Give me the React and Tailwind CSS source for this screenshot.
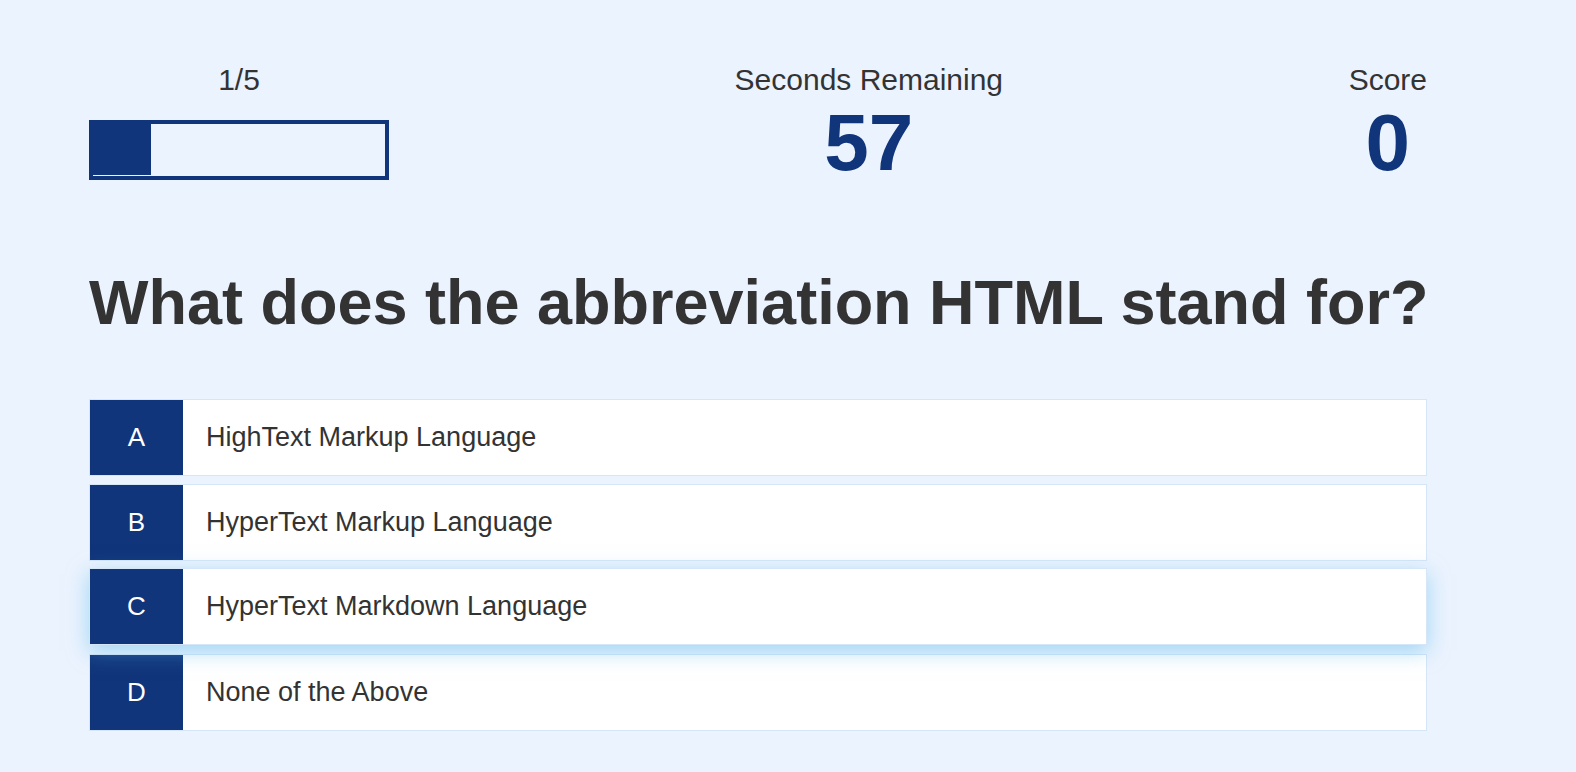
const choices = [
  { letter: 'A', text: 'HighText Markup Language' },
  { letter: 'B', text: 'HyperText Markup Language' },
  { letter: 'C', text: 'HyperText Markdown Language', hover: true },
  { letter: 'D', text: 'None of the Above' },
];

function Choice({ letter, text, hover }) {
  return (
    <div
      className={`mb-2 flex h-[77px] border border-[#d5e6f8] bg-white ${
        hover ? '-translate-y-px shadow-[0_6px_20px_0_rgba(86,185,235,0.5)]' : ''
      }`}
    >
      <div className="grid w-[93px] shrink-0 place-items-center bg-[#11357a] text-[26px] text-white">
        {letter}
      </div>
      <p className="flex items-center px-[23px] text-[27px] text-[#333]">{text}</p>
    </div>
  );
}

export default function App() {
  return (
    <div className="min-h-screen bg-[#ebf3fe] font-['Liberation_Sans',Arial,sans-serif] text-[#333]">
      <div className="ml-[89px] w-[1338px] pt-[63px]">
        {/* HUD */}
        <div className="flex items-start justify-between">
          <div className="flex w-[300px] flex-col items-center">
            <p className="text-[30px] leading-[1.15]">1/5</p>
            <div className="mt-[22px] h-[60px] w-[300px] border-4 border-[#11357a]">
              <div className="-ml-1 -mt-1 h-[55px] w-[62px] bg-[#11357a]" />
            </div>
          </div>
          <div className="flex flex-col items-center">
            <p className="text-[30px] leading-[1.15]">Seconds Remaining</p>
            <p className="mt-[5px] text-[80px] font-bold leading-none text-[#11357a]">57</p>
          </div>
          <div className="flex flex-col items-center">
            <p className="text-[30px] leading-[1.15]">Score</p>
            <p className="mt-[5px] text-[80px] font-bold leading-none text-[#11357a]">0</p>
          </div>
        </div>

        {/* Question */}
        <h2 className="mt-[88px] whitespace-nowrap text-[63px] font-bold leading-none text-[#333]">
          What does the abbreviation HTML stand for?
        </h2>

        {/* Choices */}
        <div className="mt-[65px]">
          {choices.map((c) => (
            <Choice key={c.letter} {...c} />
          ))}
        </div>
      </div>
    </div>
  );
}
